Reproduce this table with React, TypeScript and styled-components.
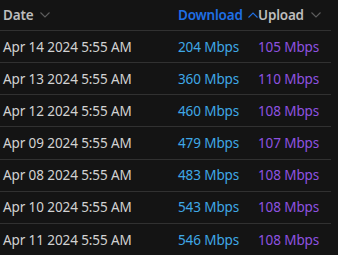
import React from "react";
import styled, { createGlobalStyle } from "styled-components";

const Global = createGlobalStyle`
  html, body { margin: 0; padding: 0; background: #141414; }
  body { font-family: "Noto Sans", "Open Sans", sans-serif; }
`;

const Table = styled.div`
  width: 331px;
  background: #141414;
  display: flex;
  flex-direction: column;
`;

const Row = styled.div<{ $head?: boolean }>`
  display: grid;
  grid-template-columns: 175px 80px 1fr;
  align-items: center;
  height: ${(p) => (p.$head ? "30px" : "31.17px")};
  border-bottom: 1px solid #313131;
  padding-left: 3px;
  font-size: 13.5px;
  letter-spacing: -0.1px;
`;

const HeadCell = styled.div<{ $active?: boolean }>`
  display: flex;
  align-items: center;
  gap: ${(p) => (p.$active ? "5px" : "7px")};
  color: ${(p) => (p.$active ? "#1f6fe5" : "#bdbdbd")};
  font-weight: 600;
  letter-spacing: -0.2px;
  margin-top: -1px;
`;

const Cell = styled.div<{ $kind: "date" | "down" | "up" }>`
  color: ${(p) =>
    p.$kind === "date" ? "#d2d2d2" : p.$kind === "down" ? "#3fa8e6" : "#8e52e0"};
  white-space: nowrap;
`;

const Chevron = ({ up, color }: { up?: boolean; color: string }) => (
  <svg width="10" height="6" viewBox="0 0 10 6" fill="none">
    <path
      d={up ? "M0.5 5.5 L5 1 L9.5 5.5" : "M0.5 0.5 L5 5 L9.5 0.5"}
      stroke={color}
      strokeWidth="1.1"
    />
  </svg>
);

const rows = [
  ["Apr 14 2024 5:55 AM", "204 Mbps", "105 Mbps"],
  ["Apr 13 2024 5:55 AM", "360 Mbps", "110 Mbps"],
  ["Apr 12 2024 5:55 AM", "460 Mbps", "108 Mbps"],
  ["Apr 09 2024 5:55 AM", "479 Mbps", "107 Mbps"],
  ["Apr 08 2024 5:55 AM", "483 Mbps", "108 Mbps"],
  ["Apr 10 2024 5:55 AM", "543 Mbps", "108 Mbps"],
  ["Apr 11 2024 5:55 AM", "546 Mbps", "108 Mbps"],
];

export default function App() {
  return (
    <>
      <Global />
      <Table>
        <Row $head>
          <HeadCell>
            Date <Chevron color="#5e5e5e" />
          </HeadCell>
          <HeadCell $active>
            Download <Chevron up color="#1f6fe5" />
          </HeadCell>
          <HeadCell>
            Upload <Chevron color="#5e5e5e" />
          </HeadCell>
        </Row>
        {rows.map((r) => (
          <Row key={r[0]}>
            <Cell $kind="date">{r[0]}</Cell>
            <Cell $kind="down">{r[1]}</Cell>
            <Cell $kind="up">{r[2]}</Cell>
          </Row>
        ))}
      </Table>
    </>
  );
}
